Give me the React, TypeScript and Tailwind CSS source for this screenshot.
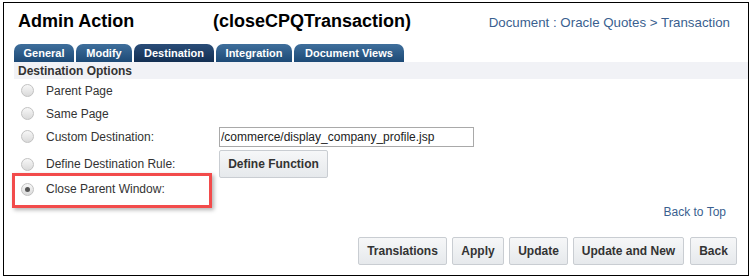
import { useState } from "react";

type TOption = {
  id: string;
  label: string;
};

const options: TOption[] = [
  { id: "parent", label: "Parent Page" },
  { id: "same", label: "Same Page" },
  { id: "custom", label: "Custom Destination:" },
  { id: "rule", label: "Define Destination Rule:" },
  { id: "close", label: "Close Parent Window:" },
];

const tabs = [
  { name: "General", w: "w-[60px]" },
  { name: "Modify", w: "w-[56px]" },
  { name: "Destination", w: "w-[80px]" },
  { name: "Integration", w: "w-[76px]" },
  { name: "Document Views", w: "w-[110px]" },
];

const Radio = ({ checked, onClick }: { checked: boolean; onClick: () => void }) => (
  <span
    onClick={onClick}
    className="w-[13px] h-[13px] rounded-full border border-[#c2c2c2] bg-gradient-to-b from-[#f7f7f7] to-[#dadada] flex items-center justify-center shrink-0 cursor-pointer"
  >
    {checked && <span className="w-[5px] h-[5px] rounded-full bg-[#555]" />}
  </span>
);

const GrayButton = ({ children, className = "" }: { children: React.ReactNode; className?: string }) => (
  <button
    className={
      "h-[28px] whitespace-nowrap flex items-center justify-center border border-[#c9cdd2] rounded-[2px] bg-gradient-to-b from-[#f6f7f8] to-[#e6e9ec] text-[12px] font-bold text-[#333] " +
      className
    }
  >
    {children}
  </button>
);

const App = () => {
  const [selected, setSelected] = useState("close");
  const [activeTab, setActiveTab] = useState("Destination");
  const [url, setUrl] = useState("/commerce/display_company_profile.jsp");

  return (
    <div className="w-[750px] h-[279px] bg-white pt-[2px] pl-[3px] font-['Liberation_Sans',Arial,sans-serif]">
      <div className="w-[746px] h-[274px] border border-black flex flex-col">
        {/* header */}
        <div className="h-[41px] pt-[7px] flex items-start">
          <span className="ml-[14px] w-[195px] text-[18px] leading-[22px] font-bold text-black">Admin Action</span>
          <span className="text-[18px] leading-[22px] font-bold text-black">(closeCPQTransaction)</span>
          <span className="ml-auto mr-[18px] mt-[4px] text-[13.3px] leading-[18px] text-[#3a5f8f]">
            Document : Oracle Quotes &gt; Transaction
          </span>
        </div>

        {/* tabs */}
        <div className="h-[18px] pl-[10px] flex gap-[2px]">
          {tabs.map((tab) => (
            <div
              key={tab.name}
              onClick={() => setActiveTab(tab.name)}
              className={
                tab.w +
                " h-[18px] rounded-t-[7px] flex items-center justify-center whitespace-nowrap text-[11px] font-bold text-white cursor-pointer " +
                (activeTab === tab.name
                  ? "bg-gradient-to-b from-[#2a4d78] to-[#132f52]"
                  : "bg-gradient-to-b from-[#3f6f9c] to-[#1d4a76]")
              }
            >
              {tab.name}
            </div>
          ))}
        </div>

        {/* section */}
        <div className="ml-[10px] h-[17px] bg-[#f1f2f6] flex items-center pl-[4px] text-[12px] font-bold text-[#333]">
          Destination Options
        </div>

        <div className="pl-[10px] flex flex-col text-[12px] text-[#333]">
          {options.map((opt) => (
            <div
              key={opt.id}
              className={
                "relative flex items-center " +
                (opt.id === "rule" ? "h-[30px] pt-[2px]" : opt.id === "close" ? "h-[22px]" : "h-[23px]")
              }
            >
              <div className="w-[205px] flex items-center">
                <span className="ml-[7px]">
                  <Radio checked={selected === opt.id} onClick={() => setSelected(opt.id)} />
                </span>
                <span className="ml-[12px]">{opt.label}</span>
              </div>
              {opt.id === "custom" && (
                <input
                  value={url}
                  onChange={(e) => setUrl(e.target.value)}
                  className="w-[255px] h-[20px] border border-[#a9a9a9] px-[1px] text-[12px] text-[#222] outline-none"
                />
              )}
              {opt.id === "rule" && <GrayButton className="w-[109px]">Define Function</GrayButton>}
              {opt.id === "close" && (
                <div className="absolute left-[-2px] top-[-5px] w-[200px] h-[35px] border-[3px] border-[#f24b4b] shadow-[2px_2px_4px_rgba(0,0,0,0.3)]" />
              )}
            </div>
          ))}
        </div>

        <div className="mt-[5px] h-[14px] flex justify-end pr-[22px] text-[12px] leading-[14px] text-[#3a5f8f]">
          Back to Top
        </div>

        <div className="mt-[18px] flex justify-end gap-[5px] pr-[11px]">
          <GrayButton className="w-[89px]">Translations</GrayButton>
          <GrayButton className="w-[52px]">Apply</GrayButton>
          <GrayButton className="w-[59px]">Update</GrayButton>
          <GrayButton className="w-[111px] mr-[1px]">Update and New</GrayButton>
          <GrayButton className="w-[47px]">Back</GrayButton>
        </div>
      </div>
    </div>
  );
};

export default App;
